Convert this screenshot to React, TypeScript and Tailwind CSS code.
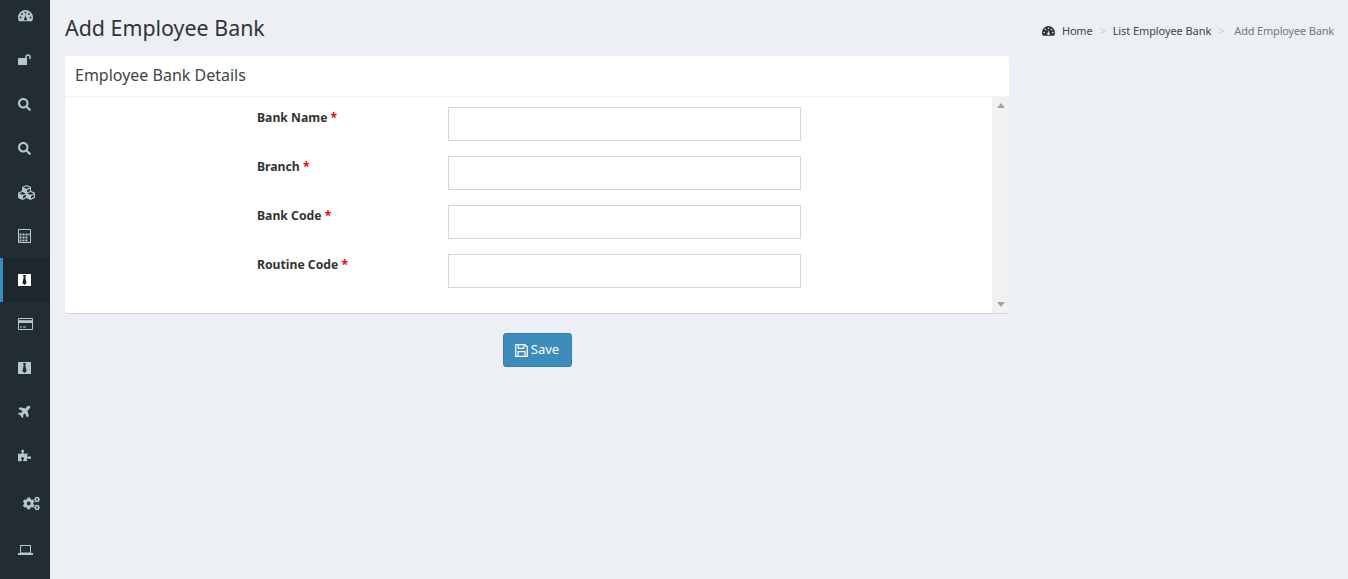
import React from 'react';
import { FaCogs, FaCubes, FaPlane, FaPuzzlePiece, FaSearch } from 'react-icons/fa';

const font = { fontFamily: '"Noto Sans", sans-serif' };
const DARK = '#222d32';

type IconProps = { hole?: string };

const Dashboard = ({ hole = DARK, w = 15 }: IconProps & { w?: number }) => (
  <svg width={w} height={w * 0.75} viewBox="0 0 16 12">
    <path d="M8 0a8 8 0 0 0-8 8c0 1.5.4 2.9 1.1 4h13.8A8 8 0 0 0 16 8a8 8 0 0 0-8-8z" fill="currentColor" />
    <circle cx="2.7" cy="8" r="1" fill={hole} />
    <circle cx="4.3" cy="4.3" r="1" fill={hole} />
    <circle cx="8" cy="2.7" r="1" fill={hole} />
    <circle cx="11.7" cy="4.3" r="1" fill={hole} />
    <circle cx="13.3" cy="8" r="1" fill={hole} />
    <circle cx="8" cy="9.5" r="1.6" fill={hole} />
    <path d="M7.2 9.5 8 4.6l.8 4.9z" fill={hole} />
  </svg>
);

const Unlock = () => (
  <svg width="14" height="11" viewBox="0 0 14 11" className="mb-[1px]">
    <rect x="0" y="4" width="9" height="7" rx="0.5" fill="currentColor" />
    <path d="M8 5V3a2 2 0 0 1 4 0v2" fill="none" stroke="currentColor" strokeWidth="1.5" />
  </svg>
);

const Calculator = () => (
  <svg width="13" height="14" viewBox="0 0 13 14">
    <rect width="13" height="14" rx="0.5" fill="currentColor" />
    <rect x="1" y="1" width="11" height="12" fill={DARK} />
    {[5, 8, 11].map((y) =>
      [1.5, 4.5, 7.5].map((x) => <rect key={`${x}-${y}`} x={x} y={y - 0.5} width="2" height="2" fill="currentColor" />),
    )}
    <rect x="10.5" y="4.5" width="1.2" height="2" fill="currentColor" />
  </svg>
);

const Tie = ({ dark = '#1a2226' }: { dark?: string }) => (
  <svg width="13" height="12" viewBox="0 0 13 12">
    <rect width="13" height="12" fill="currentColor" />
    <path d="M5 1h3L7.3 3.5 8.6 9 6.5 11 4.4 9l1.3-5.5z" fill={dark} />
  </svg>
);

const Card = () => (
  <svg width="15" height="12" viewBox="0 0 15 12">
    <rect width="15" height="12" rx="1" fill="currentColor" />
    <rect x="1" y="1" width="13" height="1.2" fill={DARK} />
    <rect x="1" y="5" width="13" height="6" fill={DARK} />
    <rect x="2" y="8.5" width="2" height="1" fill="currentColor" />
    <rect x="5" y="8.5" width="3" height="1" fill="currentColor" />
  </svg>
);

const Laptop = () => (
  <svg width="15" height="10" viewBox="0 0 15 10">
    <rect x="2.5" y="0.5" width="10" height="7.5" fill="none" stroke="currentColor" strokeWidth="1" />
    <rect x="0" y="8" width="15" height="2" fill="currentColor" />
  </svg>
);

const Floppy = () => (
  <svg width="13" height="13" viewBox="0 0 13 13">
    <path d="M.7.7h9.2l2.4 2.4v9.2H.7z" fill="none" stroke="currentColor" strokeWidth="1.3" />
    <path d="M3.2 1v3.4h5.6V1" fill="none" stroke="currentColor" strokeWidth="1.2" />
    <path d="M3 12V7.6h7V12" fill="none" stroke="currentColor" strokeWidth="1.2" />
  </svg>
);

const navItems = [
  { icon: <Dashboard /> },
  { icon: <Unlock /> },
  { icon: <FaSearch size={13} /> },
  { icon: <FaSearch size={13} /> },
  { icon: <FaCubes size={17} /> },
  { icon: <Calculator /> },
  { icon: <Tie />, active: true },
  { icon: <Card /> },
  { icon: <Tie dark={DARK} /> },
  { icon: <FaPlane size={14} className="mb-[2px] -rotate-45" /> },
  { icon: <FaPuzzlePiece size={13} className="mb-[2px]" /> },
];

const fields = ['Bank Name', 'Branch', 'Bank Code', 'Routine Code'];

export default function App() {
  return (
    <div className="flex h-[579px] overflow-hidden bg-[#ecf0f5] text-[#333]" style={font}>
      <aside className="flex w-[50px] shrink-0 flex-col bg-[#222d32] text-[#b8c7ce]">
        <div className="-mt-[6px] flex flex-col">
          {navItems.map((item, i) => (
            <div
              key={i}
              className={`flex h-[44px] items-center ${item.active ? 'border-l-[3px] border-[#3c8dbc] bg-[#1e282c] pl-[15px] text-white' : 'pl-[18px]'}`}
            >
              {item.icon}
            </div>
          ))}
        </div>
        <div className="flex h-[50px] items-center pl-[23px]">
          <FaCogs size={17} />
        </div>
        <div className="flex h-[44px] items-center pl-[18px]">
          <Laptop />
        </div>
      </aside>

      <main className="min-w-0 flex-1 pl-[15px] pr-[14px]">
        <div className="flex h-[56px] items-center justify-between pb-[1px]">
          <h1 className="text-[21.4px] leading-none">Add Employee Bank</h1>
          <div className="flex items-center pt-[7px] text-[11px] tracking-[-0.18px]">
            <span className="mr-[7px] text-[#333]">
              <Dashboard hole="#ecf0f5" w={13} />
            </span>
            <span className="text-[#444]">Home</span>
            <span className="mx-[7px] text-[#ccc]">&gt;</span>
            <span className="tracking-[-0.08px] text-[#444]">List Employee Bank</span>
            <span className="ml-[7px] mr-[10px] text-[#ccc]">&gt;</span>
            <span className="text-[#777]">Add Employee Bank</span>
          </div>
        </div>

        <div className="w-[944px] rounded-[3px] border-b border-[#d2d6de] bg-white">
          <div className="flex h-[41px] items-center border-b border-[#f4f4f4] px-[10px] pb-[2px] text-[16px] text-[#444]">
            Employee Bank Details
          </div>
          <div className="flex h-[216px]">
            <div className="flex flex-1 flex-col gap-[15px] pl-[192px] pt-[10px]">
              {fields.map((label) => (
                <div key={label} className="flex">
                  <label className="w-[191px] shrink-0 pt-[1px] text-[12.2px] font-bold leading-5">
                    {label} <span className="text-[#ff0000]">*</span>
                  </label>
                  <input className="h-[34px] w-[353px] border border-[#d2d6de] bg-white" />
                </div>
              ))}
            </div>
            <div className="flex w-[17px] shrink-0 flex-col items-center justify-between bg-[#f1f1f1] py-[6px]">
              <div className="h-0 w-0 border-x-[4px] border-b-[5px] border-x-transparent border-b-[#a3a3a3]" />
              <div className="h-0 w-0 border-x-[4px] border-t-[5px] border-x-transparent border-t-[#a3a3a3]" />
            </div>
          </div>
        </div>

        <div className="mt-[19px] flex w-[944px] justify-center">
          <button className="flex h-[34px] w-[69px] items-center justify-center gap-[3px] rounded-[3px] border border-[#367fa9] bg-[#3c8dbc] text-[13px] text-white">
            <Floppy />
            Save
          </button>
        </div>
      </main>
    </div>
  );
}
